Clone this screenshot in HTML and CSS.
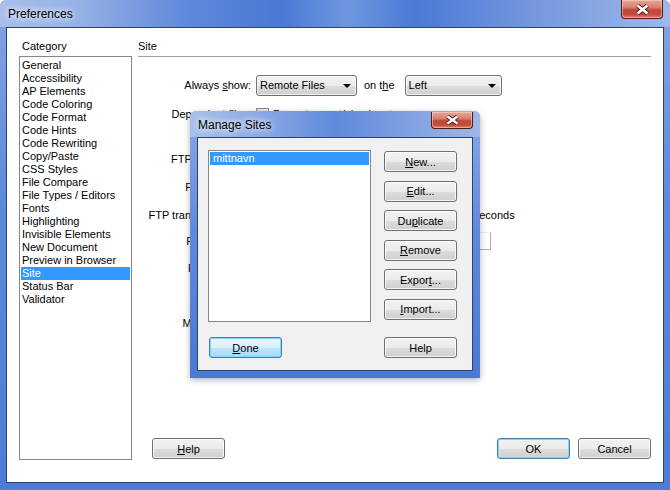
FILE: index.html
```html
<!DOCTYPE html>
<html lang="en">
<head>
  <meta charset="UTF-8">
  <title>Preferences</title>
  <link rel="stylesheet" href="styles.css">
</head>
<body>
  <div class="window">
    <div class="titlebar">
      <span class="title">Preferences</span>
      <span class="close-btn">
        <svg width="15" height="11" viewBox="0 0 15 11">
          <path d="M2.5 1.5 L12.5 9.5 M12.5 1.5 L2.5 9.5" stroke="#5b2219" stroke-width="4.6"/>
          <path d="M2.5 1.5 L12.5 9.5 M12.5 1.5 L2.5 9.5" stroke="#fff" stroke-width="2.6"/>
        </svg>
      </span>
    </div>

    <div class="client">
      <!-- Category column -->
      <div class="category-col">
        <div class="group-label">Category</div>
        <ul class="listbox category-list">
          <li>General</li>
          <li>Accessibility</li>
          <li>AP Elements</li>
          <li>Code Coloring</li>
          <li>Code Format</li>
          <li>Code Hints</li>
          <li>Code Rewriting</li>
          <li>Copy/Paste</li>
          <li>CSS Styles</li>
          <li>File Compare</li>
          <li>File Types / Editors</li>
          <li>Fonts</li>
          <li>Highlighting</li>
          <li>Invisible Elements</li>
          <li>New Document</li>
          <li>Preview in Browser</li>
          <li class="selected">Site</li>
          <li>Status Bar</li>
          <li>Validator</li>
        </ul>
      </div>

      <!-- Site panel -->
      <div class="site-col">
        <div class="group-label site-label">Site</div>
        <div class="separator"></div>

        <div class="form-grid">
          <div class="label">Always <u>s</u>how:</div>
          <div class="ctrl">
            <span class="combo combo-files">Remote Files<span class="arrow"></span></span>
            <span class="on-the">on t<u>h</u>e</span>
            <span class="combo combo-side">Left<span class="arrow"></span></span>
          </div>

          <div class="label label-top">Dependent files:</div>
          <div class="ctrl ctrl-stack">
            <span class="check-line"><span class="checkbox checked"></span>Prompt on get/check out</span>
            <span class="check-line"><span class="checkbox checked"></span>Prompt on put/check in</span>
          </div>

          <div class="label">FTP connection:</div>
          <div class="ctrl"><span class="checkbox checked"></span>Disconnect after <span class="field field-sm">30</span> minutes idle</div>

          <div class="label">FTP time out:</div>
          <div class="ctrl"><span class="field field-sm">60</span> seconds</div>

          <div class="label">FTP transfer options:</div>
          <div class="ctrl"><span class="checkbox checked"></span>Select default action in dialogs after <span class="field field-xs">30</span> seconds</div>

          <div class="label">Firewall host:</div>
          <div class="ctrl"><span class="field field-host"></span></div>

          <div class="label">Firewall port:</div>
          <div class="ctrl"><span class="field field-sm">21</span></div>

          <div class="label">Put options:</div>
          <div class="ctrl"><span class="checkbox"></span>Save files before putting</div>

          <div class="label">Move options:</div>
          <div class="ctrl"><span class="checkbox checked"></span>Prompt before moving files on server</div>
        </div>

        <div class="button-row">
          <button class="btn help-btn"><u>H</u>elp</button>
          <button class="btn default">OK</button>
          <button class="btn">Cancel</button>
        </div>
      </div>
    </div>
  </div>

  <!-- Manage Sites dialog on top -->
  <div class="dialog">
    <div class="titlebar dialog-titlebar">
      <span class="title">Manage Sites</span>
      <span class="close-btn small">
        <svg width="15" height="10" viewBox="0 0 15 10">
          <path d="M2.5 1.5 L12.5 8.5 M12.5 1.5 L2.5 8.5" stroke="#5b2219" stroke-width="4.4"/>
          <path d="M2.5 1.5 L12.5 8.5 M12.5 1.5 L2.5 8.5" stroke="#fff" stroke-width="2.4"/>
        </svg>
      </span>
    </div>
    <div class="dialog-client">
      <ul class="listbox sites-list">
        <li class="selected">mittnavn</li>
      </ul>
      <div class="site-buttons">
        <button class="btn"><u>N</u>ew...</button>
        <button class="btn"><u>E</u>dit...</button>
        <button class="btn">Du<u>p</u>licate</button>
        <button class="btn"><u>R</u>emove</button>
        <button class="btn">Expor<u>t</u>...</button>
        <button class="btn"><u>I</u>mport...</button>
      </div>
      <button class="btn default focused done-btn"><u>D</u>one</button>
      <button class="btn">Help</button>
    </div>
  </div>
</body>
</html>
```
FILE: styles.css
```css
body {
  margin: 0;
  width: 670px;
  height: 490px;
  overflow: hidden;
  background: #fff;
  font-family: "Liberation Sans", Arial, sans-serif;
  font-size: 11px;
  color: #000;
}

ul {
  list-style: none;
  margin: 0;
  padding: 0;
}

/* Aero frame */
.window {
  height: 490px;
  box-sizing: border-box;
  padding: 0 6px 7px 6px;
  border-radius: 6px 6px 0 0;
  background: linear-gradient(180deg, #86a5e2 0%, #5f89db 40%, #4d7bd6 100%);
  display: flex;
  flex-direction: column;
}

.titlebar {
  height: 27px;
  margin: 0 -6px;
  padding: 0 8px;
  display: flex;
  align-items: flex-start;
  justify-content: space-between;
  border-radius: 6px 6px 0 0;
  background: linear-gradient(90deg, #a7bfea 0%, #94b0e6 12%, #5f88da 28%, #4a78d4 42%, #6f97e0 52%, #4b79d5 62%, #7698de 80%, #9db8ea 100%);
}

.title {
  font-size: 12px;
  line-height: 28px;
  text-shadow: 0 0 6px #fff, 0 0 10px #fff;
}

.close-btn {
  width: 42px;
  height: 19px;
  margin-right: -1px;
  box-sizing: border-box;
  border: 1px solid #4f1a12;
  border-top: none;
  border-radius: 0 0 4px 4px;
  background: linear-gradient(180deg, #e6a798 0%, #d78272 40%, #c4463a 55%, #c54a36 80%, #d9826a 100%);
  box-shadow: inset 0 0 0 1px rgba(255, 220, 210, 0.5);
  display: flex;
  align-items: center;
  justify-content: center;
}

.close-btn.small {
  width: 42px;
  height: 17px;
  margin-top: 1px;
}

.client {
  flex: 1;
  display: flex;
  gap: 6px;
  background: #fff;
  border: 1px solid #2a4374;
  padding: 12px 12px 22px 12px;
}

.group-label {
  height: 13px;
  line-height: 13px;
  padding-left: 3px;
  margin-bottom: 3px;
}

.category-col {
  width: 113px;
  display: flex;
  flex-direction: column;
}

.listbox {
  border: 1px solid #828790;
  padding: 1px;
  background: #fff;
}

.listbox li {
  height: 13px;
  line-height: 13px;
  padding-left: 1px;
  white-space: nowrap;
}

.listbox li.selected {
  background: #3399ff;
  color: #fff;
}

.category-list {
  flex: 1;
  padding-top: 2px;
}

.site-col {
  flex: 1;
  display: flex;
  flex-direction: column;
}

.site-label {
  padding-left: 0;
}

.separator {
  height: 1px;
  background: #a0a0a0;
}

/* form behind the dialog */
.form-grid {
  margin-top: 14px;
  display: grid;
  grid-template-columns: 113px 1fr;
  grid-template-rows: 28px 45px 29px 28px 27px 26px 27px 28px 27px;
  column-gap: 5px;
  align-items: center;
}

.label {
  text-align: right;
  white-space: nowrap;
}

.label-top {
  align-self: start;
  margin-top: 9px;
}

.ctrl {
  display: flex;
  align-items: center;
  white-space: nowrap;
}

.ctrl-stack {
  flex-direction: column;
  align-items: flex-start;
  align-self: start;
  margin-top: 7px;
}

.check-line {
  display: flex;
  align-items: center;
  height: 16px;
}

.checkbox {
  width: 13px;
  height: 13px;
  box-sizing: border-box;
  border: 1px solid #8f8f8f;
  background: linear-gradient(135deg, #dcdcdc, #fbfbfb);
  margin-right: 4px;
}

.field {
  height: 18px;
  box-sizing: border-box;
  border: 1px solid #abadb3;
  border-top-color: #e3e9ef;
  background: #fff;
  padding: 0 3px;
  line-height: 16px;
  margin: 0 4px;
}

.field-sm { width: 34px; }
.field-xs { width: 19px; }
.field-host { width: 235px; margin: 0; }

.combo {
  position: relative;
  height: 21px;
  box-sizing: border-box;
  border: 1px solid #707070;
  border-radius: 3px;
  background: linear-gradient(180deg, #f2f2f2 0%, #ebebeb 50%, #dddddd 51%, #cfcfcf 100%);
  box-shadow: inset 0 0 0 1px rgba(255, 255, 255, 0.7);
  padding-left: 3px;
  line-height: 19px;
}

.combo-files { width: 101px; }
.combo-side { width: 97px; }

.arrow {
  position: absolute;
  right: 5px;
  top: 8px;
  border-left: 4px solid transparent;
  border-right: 4px solid transparent;
  border-top: 4px solid #000;
}

.on-the {
  margin: 0 10px 0 7px;
}

.button-row {
  margin-top: auto;
  margin-bottom: 1px;
  display: flex;
  gap: 8px;
}

.help-btn {
  margin-left: 14px;
  margin-right: auto;
}

/* Vista buttons */
.btn {
  width: 73px;
  height: 21px;
  padding: 0;
  box-sizing: border-box;
  border: 1px solid #707070;
  border-radius: 3px;
  background: linear-gradient(180deg, #f2f2f2 0%, #ebebeb 50%, #dddddd 51%, #cfcfcf 100%);
  box-shadow: inset 0 0 0 1px rgba(255, 255, 255, 0.75);
  font: inherit;
  color: #000;
}

.btn.default {
  border-color: #3c7fb1;
  box-shadow: inset 0 0 0 1px #7fd8f8;
}

.btn.focused {
  background: linear-gradient(180deg, #eaf6fd 0%, #d9f0fc 50%, #bee6fd 51%, #a7d9f5 100%);
}

/* Manage Sites dialog */
.dialog {
  position: absolute;
  left: 190px;
  top: 111px;
  width: 290px;
  height: 267px;
  box-sizing: border-box;
  padding: 0 7px 7px 7px;
  display: flex;
  flex-direction: column;
  border-radius: 6px 6px 0 0;
  background: linear-gradient(180deg, #8aa9e4 0%, #5f8adb 45%, #4a78d4 100%);
  box-shadow: 0 2px 6px rgba(0, 0, 0, 0.3);
}

.dialog-titlebar {
  height: 26px;
  margin: 0 -7px;
  background: linear-gradient(90deg, #a8c0ea 0%, #8aa8e4 25%, #5f89da 50%, #7fa0e2 75%, #9fb8e8 100%);
}

.dialog-titlebar .title {
  line-height: 28px;
}

.dialog-client {
  flex: 1;
  background: #f0f0f0;
  border: 1px solid #2a4374;
  padding: 12px 0 0 10px;
  display: grid;
  grid-template-columns: 163px 73px;
  grid-template-rows: 172px 21px;
  column-gap: 13px;
  row-gap: 15px;
}

.sites-list {
  box-sizing: border-box;
}

.sites-list li {
  padding-left: 3px;
}

.site-buttons {
  margin-top: 1px;
  height: 169px;
  display: flex;
  flex-direction: column;
  justify-content: space-between;
}

.done-btn {
  margin-left: 1px;
}
```
